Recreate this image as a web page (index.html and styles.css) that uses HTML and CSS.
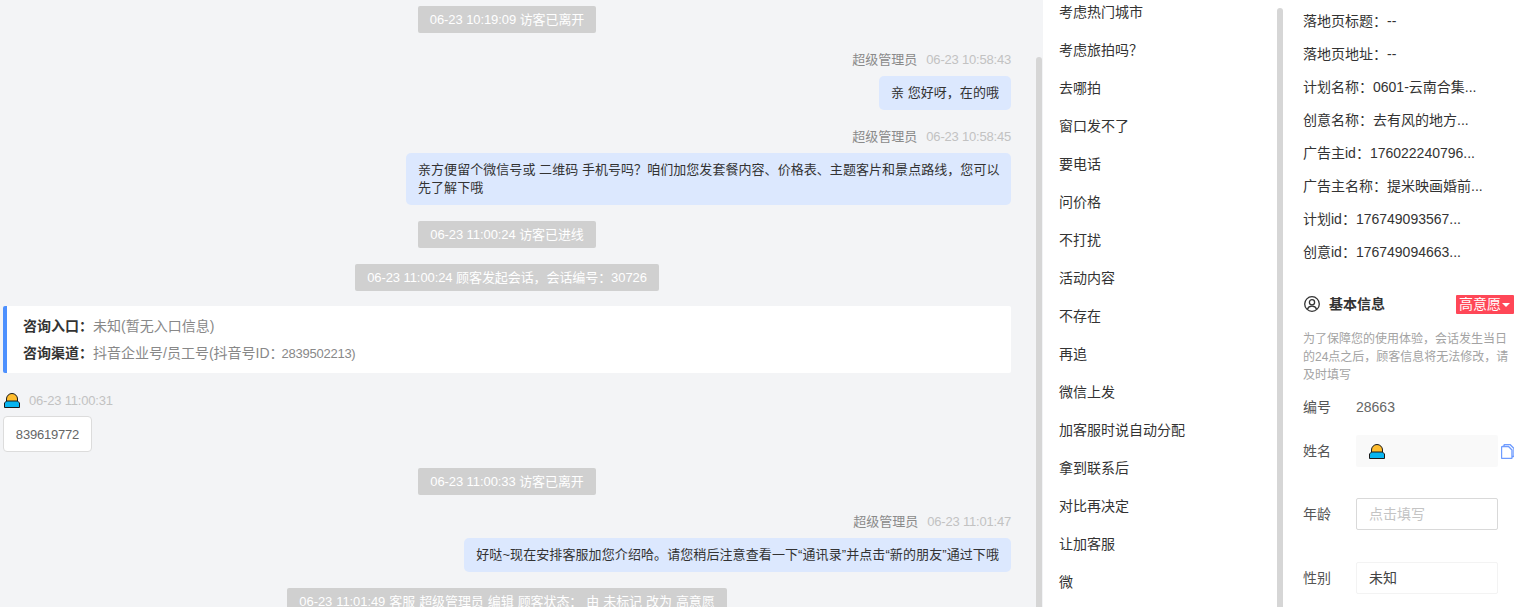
FILE: index.html
```html
<!DOCTYPE html>
<html lang="zh">
<head>
<meta charset="utf-8">
<title>会话详情</title>
<link rel="stylesheet" href="styles.css">
</head>
<body>
<svg class="defs" width="0" height="0"><defs>
<symbol id="avatar" viewBox="0 0 16 15">
<path d="M2.500 9V6a5.500 5.500 0 0 1 11 0v3z" fill="#ffbd2e" stroke="#1a1a1a" stroke-width="1"/>
<path d="M.5 14.500V10L2.500 8h11L15.500 10v4.500z" fill="#08b5f0" stroke="#1a1a1a" stroke-width="1"/>
</symbol>
</defs></svg>
<div class="page">
  <main class="chat">
    <div class="sys first"><span>06-23 10:19:09 访客已离开</span></div>
    <div class="agent-head gap-a">超级管理员<time>06-23 10:58:43</time></div>
    <div class="out"><p>亲 您好呀，在的哦</p></div>
    <div class="agent-head gap-b">超级管理员<time>06-23 10:58:45</time></div>
    <div class="out"><p class="wide">亲方便留个微信号或 二维码 手机号吗？咱们加您发套餐内容、价格表、主题客片和景点路线，您可以先了解下哦</p></div>
    <div class="sys gap-c"><span>06-23 11:00:24 访客已进线</span></div>
    <div class="sys gap-d"><span>06-23 11:00:24 顾客发起会话，会话编号：30726</span></div>
    <section class="entry">
      <div class="entry-row"><b>咨询入口：</b>未知(暂无入口信息)</div>
      <div class="entry-row"><b>咨询渠道：</b>抖音企业号/员工号(抖音号ID：<span class="num">2839502213)</span></div>
    </section>
    <div class="guest-head"><svg class="ava"><use href="#avatar"/></svg><time>06-23 11:00:31</time></div>
    <div class="in">839619772</div>
    <div class="sys gap-e"><span>06-23 11:00:33 访客已离开</span></div>
    <div class="agent-head gap-f">超级管理员<time>06-23 11:01:47</time></div>
    <div class="out"><p class="loose">好哒~现在安排客服加您介绍哈。请您稍后注意查看一下“通讯录”并点击“新的朋友”通过下哦</p></div>
    <div class="sys gap-g spaced"><span>06-23 11:01:49 客服 超级管理员 编辑 顾客状态： 由 未标记 改为 高意愿</span></div>
    <i class="bar bar-chat"></i>
  </main>
  <nav class="tags">
    <ul>
      <li>考虑热门城市</li><li>考虑旅拍吗？</li><li>去哪拍</li><li>窗口发不了</li><li>要电话</li><li>问价格</li><li>不打扰</li><li>活动内容</li><li>不存在</li><li>再追</li><li>微信上发</li><li>加客服时说自动分配</li><li>拿到联系后</li><li>对比再决定</li><li>让加客服</li><li>微</li>
    </ul>
    <i class="bar bar-tags"></i>
  </nav>
  <aside class="info">
    <dl class="ad">
      <div>落地页标题：--</div>
      <div>落地页地址：--</div>
      <div>计划名称：0601-云南合集...</div>
      <div>创意名称：去有风的地方...</div>
      <div>广告主id：176022240796...</div>
      <div>广告主名称：提米映画婚前...</div>
      <div>计划id：176749093567...</div>
      <div>创意id：176749094663...</div>
    </dl>
    <div class="base-head">
      <svg class="user" viewBox="0 0 16 16" fill="none" stroke="#333" stroke-width="1.300"><circle cx="8" cy="8" r="7.300"/><circle cx="8" cy="6.300" r="2.600"/><path d="M3.400 13.200c.7-2 2.500-3 4.600-3s3.900 1 4.600 3"/></svg>
      <h3>基本信息</h3>
      <span class="level">高意愿<i></i></span>
    </div>
    <p class="note">为了保障您的使用体验，会话发生当日的24点之后，顾客信息将无法修改，请及时填写</p>
    <div class="field plain"><label>编号</label><span>28663</span></div>
    <div class="field name"><label>姓名</label><div class="box filled"><svg class="ava"><use href="#avatar"/></svg></div>
      <svg class="copy" viewBox="0 0 14 15" fill="none" stroke="#6f9cff" stroke-width="1.400"><path d="M3 2.500V1.500a1 1 0 0 1 1-1h5l4 4v7a1 1 0 0 1-1 1h-1"/><path d="M1.500 2.500h6l3.500 3.500v7.500a1 1 0 0 1-1 1h-8.500a1 1 0 0 1-1-1v-10a1 1 0 0 1 1-1z" fill="#fff"/></svg>
    </div>
    <div class="field age"><label>年龄</label><div class="box input">点击填写</div></div>
    <div class="field sex"><label>性别</label><div class="box select">未知</div></div>
  </aside>
</div>
</body>
</html>
```
FILE: styles.css
```css
* { box-sizing: border-box; }
html, body { margin: 0; height: 100%; overflow: hidden; }
body { font-family: "Liberation Sans", "Noto Sans CJK SC", sans-serif; font-size: 13px; color: #333; background: #fff; }
.defs { position: absolute; }
.page { display: flex; width: 1514px; height: 607px; overflow: hidden; }

.chat { position: relative; width: 1043px; flex: none; height: 607px; overflow: hidden; background: #f3f4f6; padding: 6px 32px 0 3px; }
.sys { display: flex; justify-content: center; line-height: 27px; height: 27px; flex: none; }
.sys span { background: #d0d0d0; color: #fff; padding: 0 12px; border-radius: 2px; white-space: nowrap; letter-spacing: -.08px; }
.sys.spaced span { word-spacing: .5px; }
.gap-c { margin-top: 16px; }
.gap-d { margin-top: 16px; }
.gap-e { margin-top: 16px; }
.gap-g { margin-top: 16px; }
.agent-head { display: flex; justify-content: flex-end; gap: 9px; color: #8a8a8a; line-height: 18px; }
.agent-head time { color: #c2c2c2; letter-spacing: -.2px; }
.gap-a { margin-top: 18px; }
.gap-b { margin-top: 18px; }
.gap-f { margin-top: 18px; }
.out { display: flex; justify-content: flex-end; margin-top: 7px; }
.out p { margin: 0; background: #dce8fe; color: #333; padding: 8px 12px; border-radius: 5px; line-height: 18px; letter-spacing: .05px; }
.out .wide { width: 605px; padding-right: 6px; }
.out .loose { letter-spacing: .09px; }
.entry { margin-top: 15px; background: #fff; border-left: 4px solid #4d90fe; border-radius: 2px; height: 67px; padding: 7px 0 0 16px; color: #888; font-size: 14px; }
.entry-row { line-height: 27px; }
.entry-row b { color: #333; font-weight: 700; }
.num { font-size: 13px; letter-spacing: -.25px; margin-left: -2px; }
.guest-head { display: flex; align-items: center; gap: 9px; margin-top: 18px; height: 18px; }
.guest-head time { color: #c2c2c2; letter-spacing: -.2px; }
.ava { width: 16px; height: 15px; display: block; }
.guest-head .ava { margin-left: 1px; }
.in { width: 89px; height: 36px; margin-top: 7px; background: #fff; border: 1px solid #dcdcdc; border-radius: 4px; color: #666; text-align: center; line-height: 35px; letter-spacing: -.2px; }

.bar { position: absolute; width: 6px; background: #d6d6d6; border-radius: 3px 3px 0 0; bottom: 0; }
.bar-chat { right: 1px; top: 57px; }
.bar-tags { right: 0; top: 8px; }

.tags { position: relative; width: 240px; flex: none; height: 607px; overflow: hidden; background: #fff; font-size: 14px; }
.tags ul { list-style: none; margin: -7px 0 0; padding: 0 0 0 16px; }
.tags li { height: 38px; line-height: 38px; color: #333; white-space: nowrap; }

.info { flex: 1; min-width: 0; height: 607px; overflow: hidden; background: #fff; padding: 0 0 0 20px; font-size: 14px; }
.ad { margin: 5px 0 0; }
.ad div { line-height: 33px; height: 33px; color: #333; white-space: nowrap; }
.base-head { display: flex; align-items: center; height: 20px; margin-top: 25px; }
.user { width: 16px; height: 16px; margin-left: 1px; flex: none; }
.base-head h3 { margin: 0 0 0 9px; padding-bottom: 2px; font-size: 14px; font-weight: 700; color: #333; flex: 1; }
.level { position: relative; width: 58px; height: 19px; background: #ff4757; color: #fff; line-height: 19px; padding-left: 3px; border-radius: 1px; }
.level i { position: absolute; right: 4px; top: 8px; border: 4px solid transparent; border-top: 4px solid #fff; border-bottom: 0; }
.note { margin: 16px 0 0; font-size: 12px; line-height: 18px; color: #a3a3a3; height: 54px; }
.field { display: flex; align-items: center; position: relative; }
.field label { width: 53px; color: #555; flex: none; padding-bottom: 2px; }
.plain { margin-top: 14px; height: 18px; }
.plain span { color: #666; }
.box { width: 142px; height: 32px; border-radius: 2px; line-height: 30px; padding-left: 12px; flex: none; }
.name { margin-top: 19px; }
.filled { background: #f9f9f9; padding-left: 13px; display: flex; align-items: center; }
.copy { width: 14px; height: 15px; margin-left: 3px; flex: none; }
.age { margin-top: 31px; }
.input { border: 1px solid #d9d9d9; color: #c4c4c4; }
.sex { margin-top: 32px; }
.select { border: 1px solid #f3f3f3; color: #444; }
```
